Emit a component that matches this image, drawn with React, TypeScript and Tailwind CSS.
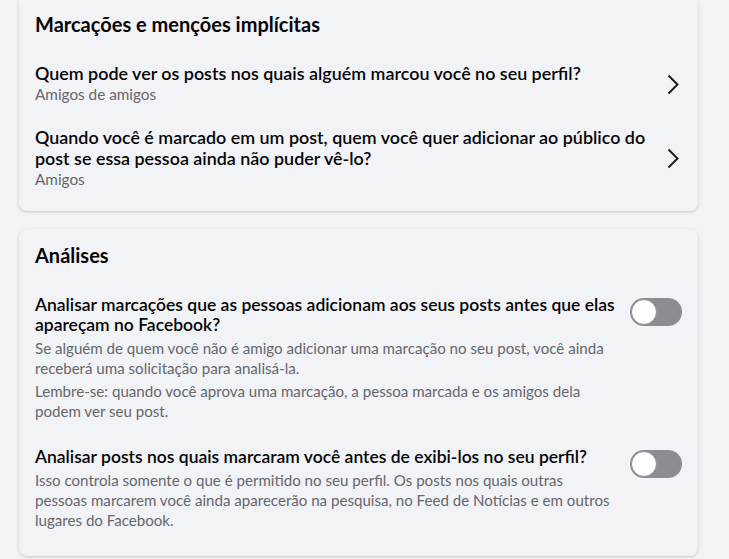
const tagRows = [
  {
    title: 'Quem pode ver os posts nos quais alguém marcou você no seu perfil?',
    value: 'Amigos de amigos',
  },
  {
    title:
      'Quando você é marcado em um post, quem você quer adicionar ao público do post se essa pessoa ainda não puder vê-lo?',
    value: 'Amigos',
  },
];

const reviewRows = [
  {
    title: 'Analisar marcações que as pessoas adicionam aos seus posts antes que elas apareçam no Facebook?',
    notes: [
      'Se alguém de quem você não é amigo adicionar uma marcação no seu post, você ainda receberá uma solicitação para analisá-la.',
      'Lembre-se: quando você aprova uma marcação, a pessoa marcada e os amigos dela podem ver seu post.',
    ],
  },
  {
    title: 'Analisar posts nos quais marcaram você antes de exibi-los no seu perfil?',
    notes: [
      'Isso controla somente o que é permitido no seu perfil. Os posts nos quais outras pessoas marcarem você ainda aparecerão na pesquisa, no Feed de Notícias e em outros lugares do Facebook.',
    ],
  },
];

function Toggle() {
  return (
    <div className="relative h-[28px] w-[52px] shrink-0 rounded-full bg-[#8a8d91]">
      <div className="absolute left-[1px] top-[1px] h-[26px] w-[26px] rounded-full border border-[#8a8d91] bg-white" />
    </div>
  );
}

function Chevron() {
  return (
    <svg width="12" height="21" viewBox="0 0 12 21" className="mr-[3px] shrink-0 text-[#1c1e21]">
      <polyline points="1.5,1.5 10.5,10.5 1.5,19.5" fill="none" stroke="currentColor" strokeWidth="2" />
    </svg>
  );
}

export default function App() {
  return (
    <div className="min-h-screen bg-[#f2f3f7] pl-[19px] [font-family:Lato,'Liberation_Sans',sans-serif] text-[#050505]">
      {/* Marcações */}
      <div className="w-[679px] rounded-b-lg bg-[#f2f3f7] px-4 pb-[10px] pt-3 shadow-[0_1px_3px_rgba(0,0,0,0.18)]">
        <h2 className="text-[20px] font-bold leading-[24px]">Marcações e menções implícitas</h2>
        <div className="mt-4">
          {tagRows.map((row) => (
            <div key={row.value} className="flex items-center gap-4 py-[11px]">
              <div className="flex-1">
                <div className="text-[17.9px] font-semibold leading-[21px]">{row.title}</div>
                <div className="text-[15.3px] leading-[21px] text-[#65676b]">{row.value}</div>
              </div>
              <Chevron />
            </div>
          ))}
        </div>
      </div>

      {/* Análises */}
      <div className="mt-[18px] w-[679px] rounded-lg bg-[#f2f3f7] px-4 pb-[13px] pt-[14px] shadow-[0_1px_3px_rgba(0,0,0,0.18)]">
        <h2 className="text-[20px] font-bold leading-[24px]">Análises</h2>
        <div className="mt-[15px]">
          {reviewRows.map((row) => (
            <div key={row.title} className="flex items-start gap-2 py-[13px]">
              <div className="flex-1">
                <div className="text-[17.5px] font-semibold leading-[20px]">{row.title}</div>
                <div className="mt-[3px] flex w-[581px] flex-col gap-[3px]">
                  {row.notes.map((n) => (
                    <p key={n} className="text-[15.1px] leading-[20px] text-[#65676b]">
                      {n}
                    </p>
                  ))}
                </div>
              </div>
              <div className="pt-[3px]">
                <Toggle />
              </div>
            </div>
          ))}
        </div>
      </div>
    </div>
  );
}
